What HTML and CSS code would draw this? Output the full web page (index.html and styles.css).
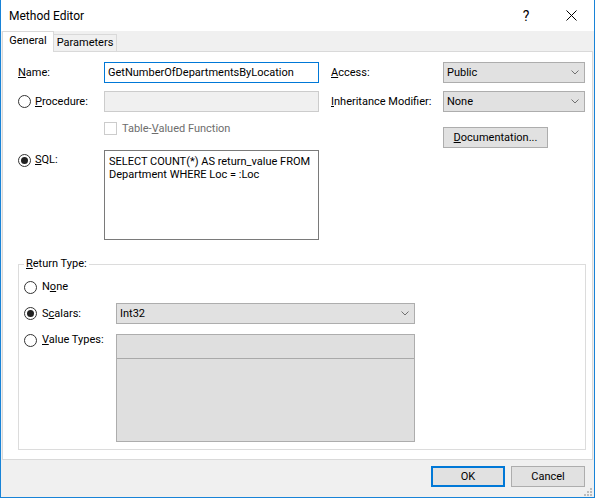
FILE: index.html
```html
<!DOCTYPE html>
<html>
<head>
<meta charset="utf-8">
<link rel="stylesheet" href="styles.css">
</head>
<body>
<div class="window">
  <div class="titlebar">
    <span class="title">Method Editor</span>
    <div class="caption-btns">
      <span class="cap help">?</span>
      <span class="cap close"><svg width="11" height="11" viewBox="0 0 11 11"><path d="M0.5 0.5 L10.5 10.5 M10.5 0.5 L0.5 10.5" stroke="#000" stroke-width="1" fill="none"/></svg></span>
    </div>
  </div>
  <div class="tabs">
    <div class="tab active">General</div>
    <div class="tab params">Parameters</div>
  </div>
  <div class="panel">
    <div class="top">
      <div class="col-left">
        <div class="row">
          <span class="lbl"><span><u>N</u>ame:</span></span>
          <input class="textbox focus" value="GetNumberOfDepartmentsByLocation">
        </div>
        <div class="row gap8">
          <span class="lbl"><span class="radio"></span><span><u>P</u>rocedure:</span></span>
          <input class="textbox disabled" disabled>
        </div>
        <div class="check-row">
          <span class="checkbox"></span>
          <span class="disabled-text">Table-<u>V</u>alued Function</span>
        </div>
        <div class="sql-row">
          <span class="lbl sql-lbl"><span class="radio on"></span><span><u>S</u>QL:</span></span>
          <textarea class="sqlbox">SELECT COUNT(*) AS return_value FROM
Department WHERE Loc = :Loc</textarea>
        </div>
      </div>
      <div class="col-right">
        <div class="row">
          <span class="rlbl"><u>A</u>ccess:</span>
          <div class="combo"><span>Public</span><svg class="chev" width="8" height="5" viewBox="0 0 8 5"><path d="M0.5 0.5 L4 4 L7.5 0.5" stroke="#707070" fill="none"/></svg></div>
        </div>
        <div class="row gap8">
          <span class="rlbl"><u>I</u>nheritance Modifier:</span>
          <div class="combo"><span>None</span><svg class="chev" width="8" height="5" viewBox="0 0 8 5"><path d="M0.5 0.5 L4 4 L7.5 0.5" stroke="#707070" fill="none"/></svg></div>
        </div>
        <div class="doc-row">
          <button class="btn doc"><u>D</u>ocumentation...</button>
        </div>
      </div>
    </div>
    <fieldset class="group">
      <legend><u>R</u>eturn Type:</legend>
      <div class="grow none-row">
        <span class="glbl"><span class="radio"></span><span>N<u>o</u>ne</span></span>
      </div>
      <div class="grow scalars-row">
        <span class="glbl"><span class="radio on"></span><span>S<u>c</u>alars:</span></span>
        <div class="combo wide"><span>Int32</span><svg class="chev" width="8" height="5" viewBox="0 0 8 5"><path d="M0.5 0.5 L4 4 L7.5 0.5" stroke="#707070" fill="none"/></svg></div>
      </div>
      <div class="grow vt-row">
        <span class="glbl vt-lbl"><span class="radio"></span><span><u>V</u>alue Types:</span></span>
        <div class="vlist"><div class="vhead"></div></div>
      </div>
    </fieldset>
  </div>
  <div class="footer">
    <button class="btn ok">OK</button>
    <button class="btn cancel">Cancel</button>
  </div>
  <svg class="grip" width="9" height="9" viewBox="0 0 9 9">
    <rect x="6" y="0" width="2" height="2" fill="#bcbcbc"/>
    <rect x="3" y="3" width="2" height="2" fill="#bcbcbc"/>
    <rect x="6" y="3" width="2" height="2" fill="#bcbcbc"/>
    <rect x="0" y="6" width="2" height="2" fill="#bcbcbc"/>
    <rect x="3" y="6" width="2" height="2" fill="#bcbcbc"/>
    <rect x="6" y="6" width="2" height="2" fill="#bcbcbc"/>
  </svg>
</div>
</body>
</html>
```
FILE: styles.css
```css
* { box-sizing: border-box; }
body {
  margin: 0;
  font-family: Roboto, "Liberation Sans", sans-serif;
  font-size: 11px;
  color: #000;
  background: #fff;
}
u { text-decoration: underline; text-underline-offset: 1px; }
.window {
  position: relative;
  width: 595px;
  height: 498px;
  border: 1px solid #1883d7;
  border-top: none;
  background: #f0f0f0;
  display: flex;
  flex-direction: column;
}
.titlebar {
  height: 31px;
  flex: none;
  background: #fff;
  display: flex;
  align-items: center;
  justify-content: space-between;
}
.title { padding-left: 8px; font-size: 12px; line-height: 16px; }
.caption-btns { display: flex; height: 100%; }
.cap {
  width: 46px;
  height: 100%;
  display: flex;
  align-items: center;
  justify-content: center;
}
.help { font-size: 14px; padding-left: 2px; }
.close svg { display: block; }
.tabs {
  height: 20px;
  flex: none;
  display: flex;
  align-items: flex-end;
  padding-left: 1px;
}
.tab {
  height: 17px;
  border: 1px solid #d9d9d9;
  border-bottom: none;
  background: #f0f0f0;
  text-align: center;
  line-height: 16px;
}
.tab.active {
  width: 52px;
  height: 21px;
  margin-bottom: -1px;
  background: #fff;
  position: relative;
  z-index: 1;
  line-height: 18px;
}
.tab.params { width: 63px; border-left: none; }
.panel {
  flex: none;
  height: 409px;
  margin: 0 1px;
  background: #fff;
  border: 1px solid #d9d9d9;
  padding: 10px 6px 0 15px;
}
.top { display: flex; gap: 12px; }
.col-left { width: 301px; display: flex; flex-direction: column; }
.col-right { display: flex; flex-direction: column; }
.row { display: flex; align-items: center; height: 21px; }
.gap8 { margin-top: 8px; }
.lbl {
  width: 86px;
  flex: none;
  display: flex;
  align-items: center;
  gap: 4px;
  line-height: 16px;
}
.rlbl { width: 112px; flex: none; line-height: 16px; white-space: nowrap; }
.textbox {
  width: 215px;
  height: 21px;
  border: 1px solid #7a7a7a;
  padding: 0 3px;
  font: inherit;
  color: #000;
  background: #fff;
  outline: none;
  margin: 0;
}
.textbox.focus { border-color: #0078d7; }
.textbox.disabled { background: #f0f0f0; border-color: #cccccc; }
.radio {
  width: 13px;
  height: 13px;
  flex: none;
  border: 1px solid #333;
  border-radius: 50%;
  background: #fff;
  display: flex;
  align-items: center;
  justify-content: center;
}
.radio.on::after {
  content: "";
  width: 7px;
  height: 7px;
  border-radius: 50%;
  background: #222;
}
.check-row {
  margin-top: 10px;
  margin-left: 86px;
  height: 13px;
  display: flex;
  align-items: center;
  gap: 5px;
}
.checkbox {
  width: 13px;
  height: 13px;
  flex: none;
  border: 1px solid #cccccc;
  background: #fff;
}
.disabled-text { color: #6d6d6d; line-height: 16px; }
.sql-row { margin-top: 15px; display: flex; align-items: flex-start; }
.sql-lbl { padding-top: 2px; }
.sqlbox {
  width: 215px;
  height: 90px;
  margin: 0;
  border: 1px solid #7a7a7a;
  padding: 4px 4px;
  font: inherit;
  line-height: 13px;
  color: #000;
  resize: none;
  overflow: hidden;
  white-space: pre;
  outline: none;
}
.combo {
  width: 142px;
  height: 21px;
  border: 1px solid #adadad;
  background: #e1e1e1;
  display: flex;
  align-items: center;
  justify-content: space-between;
  padding: 0 5px 0 3px;
}
.combo.wide { width: 299px; }
.chev { display: block; }
.doc-row { margin-top: 15px; padding-left: 112px; }
.btn {
  font: inherit;
  color: #000;
  height: 21px;
  background: #e1e1e1;
  border: 1px solid #adadad;
  padding: 0;
  margin: 0;
}
.btn.doc { width: 105px; }
.group {
  margin: 16px 0 0 0;
  width: 568px;
  border: 1px solid #dcdcdc;
  padding: 0 5px 7px 5px;
  min-width: 0;
}
.group legend {
  padding: 0 2px;
  line-height: 16px;
}
.grow { display: flex; align-items: center; }
.glbl {
  width: 92px;
  flex: none;
  display: flex;
  align-items: center;
  gap: 5px;
  line-height: 16px;
}
.none-row { margin-top: 7px; height: 16px; }
.scalars-row { margin-top: 8px; height: 21px; }
.vt-row { margin-top: 10px; align-items: flex-start; }
.vt-lbl { margin-top: -2px; }
.vlist {
  width: 299px;
  height: 108px;
  border: 1px solid #adadad;
  background: #dfdfdf;
}
.vhead { height: 24px; border-bottom: 1px solid #a9a9a9; }
.footer {
  flex: 1;
  display: flex;
  justify-content: flex-end;
  align-items: flex-start;
  gap: 6px;
  padding: 6px 9px 0 0;
}
.btn.ok { width: 74px; border: 2px solid #0078d7; }
.btn.cancel { width: 74px; }
.grip { position: absolute; right: 1px; bottom: 0; display: block; }
```
